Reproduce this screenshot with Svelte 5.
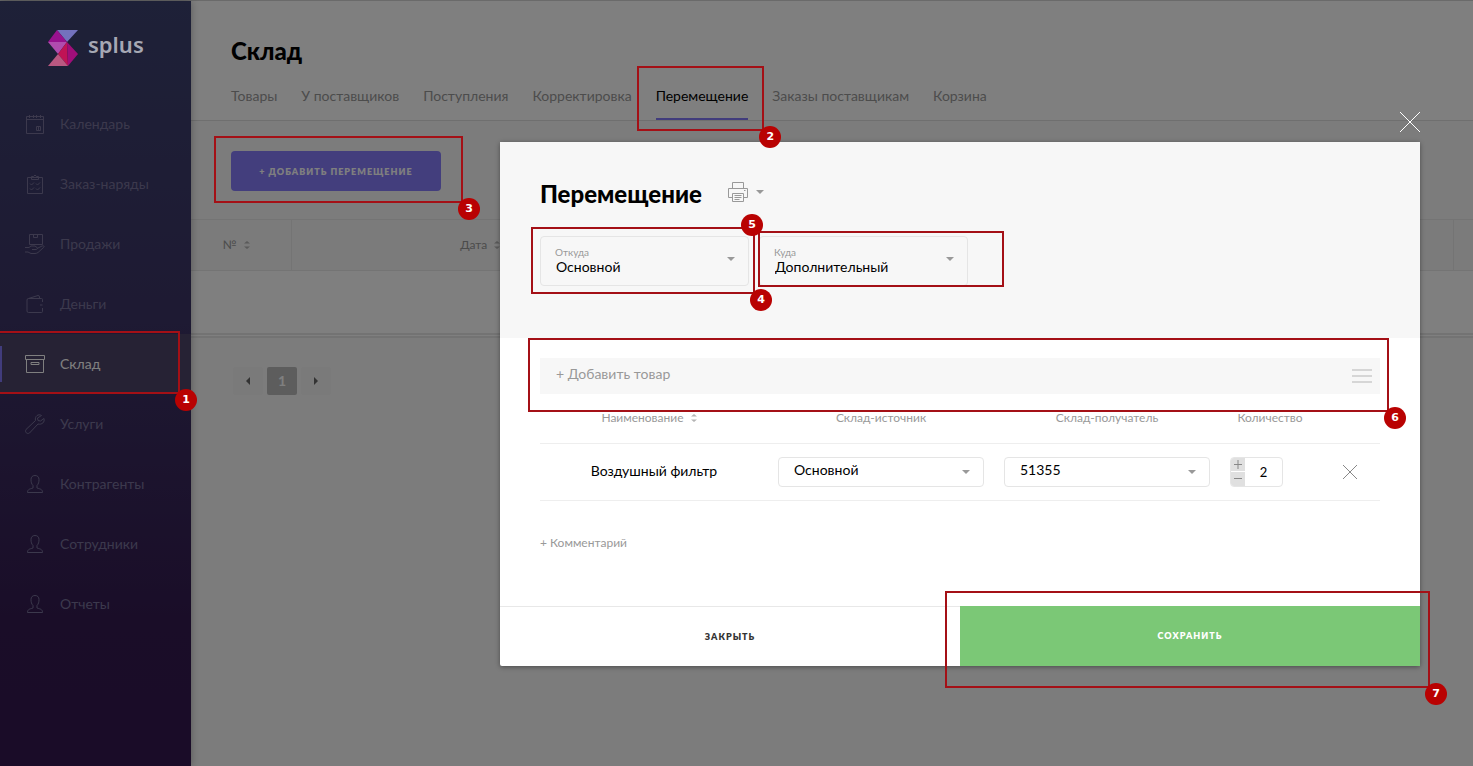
<script>
  const menu = [
    { icon: "calendar", label: "Календарь" },
    { icon: "orders", label: "Заказ-наряды" },
    { icon: "sales", label: "Продажи" },
    { icon: "wallet", label: "Деньги" },
    { icon: "box", label: "Склад", active: true },
    { icon: "wrench", label: "Услуги" },
    { icon: "person", label: "Контрагенты" },
    { icon: "person", label: "Сотрудники" },
    { icon: "person", label: "Отчеты" },
  ];

  const tabs = [
    "Товары",
    "У поставщиков",
    "Поступления",
    "Корректировка",
    "Перемещение",
    "Заказы поставщикам",
    "Корзина",
  ];
  const activeTab = "Перемещение";

  let from = $state("Основной");
  let to = $state("Дополнительный");
  let source = $state("Основной");
  let target = $state("51355");
  let quantity = $state(2);
  let search = $state("");
</script>

{#snippet caret()}
  <svg class="caret" width="8" height="4" viewBox="0 0 8 4" aria-hidden="true">
    <path d="M0 0h8L4 4z" fill="currentColor" />
  </svg>
{/snippet}

{#snippet sort()}
  <svg class="sort" width="6" height="8" viewBox="0 0 6 8" aria-hidden="true">
    <path d="M0 2.500L3 0l3 2.500zM0 5.500h6L3 8z" fill="currentColor" />
  </svg>
{/snippet}

{#snippet mark(number)}
  <span class="mark mark-{number}"><b>{number}</b></span>
{/snippet}

{#snippet menuIcon(name)}
  <svg class="menu-icon" width="20" height="20" viewBox="0 0 20 20" aria-hidden="true">
    {#if name === "calendar"}
      <path d="M1.500 2.500h17v17h-17zM1.500 5.500h17M4.500 1v3M8.500 1v3M11.500 1v3M15.500 1v3M11.500 12.500h4v4h-4zM13.500 12.500v4" />
    {:else if name === "orders"}
      <path d="M2.500 3.500h15v16h-15zM6.500 5.500v-3h2l1.500-1.500 1.500 1.500h2v3zM5 9.500l1.500 1.500 2.500-2.500M11 9.500l1.500 1.500 2.500-2.500M5 14.500l1.500 1.500 2.500-2.500M11 14.500l1.500 1.500 2.500-2.500" />
    {:else if name === "sales"}
      <path d="M4.500.500h13v10h-13zM8.500.500v3h4v-3M0 13.500h4l2-1.500h4l2 1.500c1 1 0 2-1 2H7M12 14.500l5-2.500c2-.500 3 .500 1.500 1.500L13 18.500c-1 .700-2 1-3 1H6l-3-1.500H0" />
    {:else if name === "wallet"}
      <path d="M17.500 14v3.500q0 1-1 1H3.500q-1.500 0-1.500-1.500V6q0-1.500 1.500-1.500h13q1 0 1 1V8M3.500 4.500L13 1.500q1.500 0 1.500 1.500v1.500M15 11h2.500" />
    {:else if name === "box"}
      <path d="M.500 1.500h19v4H.500zM1.500 5.500h17v13h-17zM6 8.500h8v2H6z" />
    {:else if name === "wrench"}
      <path d="M16.500 1.500c-3-2-7 .500-6 5L1 15.500c-1.500 2.500 1 5 3.500 3.500L13 10c4 1 7-2 6-5.500L15.500 7l-2.500-.500-.500-2.500z" />
    {:else}
      <path d="M10 1.500c-2.500 0-4 1.500-4 4 0 2.500.500 4.500 2 6v2.500c-2 1-5.500.500-5.500 4.500h15c0-4-3.500-3.500-5.500-4.500v-2.500c1.500-1.500 2-3.500 2-6 0-2.500-1.500-4-4-4z" />
    {/if}
  </svg>
{/snippet}

<div class="page">
  <aside>
    <a class="logo" href="#home">
      <svg width="30" height="37" viewBox="0 0 30 37" aria-hidden="true">
        <path d="M9 0h21L19 12z" fill="#7372bd" />
        <path d="M9 0L0 12h19z" fill="#98128e" />
        <path d="M0 12h19L10 24z" fill="#b04cae" />
        <path d="M19 12L10 24l10 12z" fill="#c01355" />
        <path d="M19 12l11 12-10 12z" fill="#a00e79" />
        <path d="M10 24L0 36h20z" fill="#b95881" />
      </svg>
      <span>splus</span>
    </a>
    <nav>
      {#each menu as item}
        <a class="menu-item" class:active={item.active} href="#menu">
          {@render menuIcon(item.icon)}
          <span>{item.label}</span>
          {#if item.active}
            {@render mark(1)}
          {/if}
        </a>
      {/each}
    </nav>
  </aside>

  <main>
    <header>
      <h1>Склад</h1>
      <nav class="tabs">
        {#each tabs as tab}
          <a href="#tab" class:active={tab === activeTab}>
            {tab}
            {#if tab === activeTab}
              {@render mark(2)}
            {/if}
          </a>
        {/each}
      </nav>
    </header>

    <div class="toolbar">
      <div class="anchor">
        <button class="add">+ Добавить перемещение</button>
        {@render mark(3)}
      </div>
    </div>

    <table class="list">
      <thead>
        <tr>
          <th class="number">№ {@render sort()}</th>
          <th class="date">Дата {@render sort()}</th>
          <th></th>
          <th class="last"></th>
        </tr>
      </thead>
      <tbody>
        <tr><td colspan="4"></td></tr>
      </tbody>
    </table>

    <div class="pagination">
      <button aria-label="Назад">
        <svg width="4" height="8" viewBox="0 0 4 8"><path d="M4 0v8L0 4z" /></svg>
      </button>
      <button class="current">1</button>
      <button aria-label="Вперед">
        <svg width="4" height="8" viewBox="0 0 4 8"><path d="M0 0v8l4-4z" /></svg>
      </button>
    </div>
  </main>
</div>

<div class="overlay">
  <div class="modal" role="dialog" aria-labelledby="modal-title">
    <button class="close" aria-label="Закрыть окно">
      <svg width="20" height="20" viewBox="0 0 20 20"><path d="M0 0l20 20M20 0L0 20" /></svg>
    </button>

    <div class="modal-head">
      <div class="title-row">
        <h2 id="modal-title">Перемещение</h2>
        <button class="print" aria-label="Печать">
          <svg width="20" height="20" viewBox="0 0 20 20">
            <path d="M4.500 6V.500h11V6M4.500 15.500h-4v-9h19v9h-4M4.500 11.500h11v8h-11zM6.500 13.500h7M6.500 15.500h7M6.500 17.500h5M16 8.500h1.500" />
          </svg>
          {@render caret()}
        </button>
      </div>

      <div class="stores">
        <div class="store">
          <label for="from">Откуда</label>
          <select id="from" bind:value={from}>
            <option>Основной</option>
            <option>Дополнительный</option>
          </select>
          {@render caret()}
          {@render mark(4)}
        </div>
        <div class="store">
          <label for="to">Куда</label>
          <select id="to" bind:value={to}>
            <option>Основной</option>
            <option>Дополнительный</option>
          </select>
          {@render caret()}
          {@render mark(5)}
        </div>
      </div>
    </div>

    <div class="modal-body">
      <div class="search">
        <input type="text" placeholder="+ Добавить товар" aria-label="Добавить товар" bind:value={search} />
        <button aria-label="Каталог">
          <svg width="20" height="14" viewBox="0 0 20 14"><path d="M0 1h20M0 7h20M0 13h20" /></svg>
        </button>
        {@render mark(6)}
      </div>

      <table class="goods">
        <thead>
          <tr>
            <th class="name">Наименование {@render sort()}</th>
            <th class="place">Склад-источник</th>
            <th class="place">Склад-получатель</th>
            <th class="count">Количество</th>
            <th class="remove"></th>
          </tr>
        </thead>
        <tbody>
          <tr>
            <td class="product">Воздушный фильтр</td>
            <td>
              <div class="select">
                <select aria-label="Склад-источник" bind:value={source}>
                  <option>Основной</option>
                  <option>51355</option>
                </select>
                {@render caret()}
              </div>
            </td>
            <td>
              <div class="select">
                <select aria-label="Склад-получатель" bind:value={target}>
                  <option>Основной</option>
                  <option>51355</option>
                </select>
                {@render caret()}
              </div>
            </td>
            <td>
              <div class="quantity">
                <div class="steps">
                  <button aria-label="Больше" onclick={() => (quantity += 1)}>
                    <svg width="8" height="9" viewBox="0 0 8 9"><path d="M0 4.500h8M4 0v9" /></svg>
                  </button>
                  <button aria-label="Меньше" onclick={() => (quantity -= 1)}>
                    <svg width="8" height="9" viewBox="0 0 8 9"><path d="M0 4.500h8" /></svg>
                  </button>
                </div>
                <input type="text" aria-label="Количество" bind:value={quantity} />
              </div>
            </td>
            <td>
              <button class="delete" aria-label="Удалить">
                <svg width="14" height="14" viewBox="0 0 14 14"><path d="M0 0l14 14M14 0L0 14" /></svg>
              </button>
            </td>
          </tr>
        </tbody>
      </table>

      <button class="comment">+ Комментарий</button>
    </div>

    <div class="modal-foot">
      <button class="cancel">Закрыть</button>
      <div class="anchor">
        <button class="save">Сохранить</button>
        {@render mark(7)}
      </div>
    </div>
  </div>
</div>

<style>
  :global(body) {
    font-family: Lato, "Open Sans", sans-serif;
    font-size: 14px;
    color: #000;
  }

  * {
    box-sizing: border-box;
  }

  a {
    color: inherit;
    text-decoration: none;
  }

  button,
  input,
  select {
    font: inherit;
    color: inherit;
    margin: 0;
    padding: 0;
    border: 0;
    background: none;
    border-radius: 0;
  }

  button {
    cursor: pointer;
  }

  svg {
    display: block;
    flex: none;
  }

  table {
    width: 100%;
    table-layout: fixed;
    border-collapse: collapse;
  }

  th {
    font-size: 12px;
    font-weight: 400;
    color: #999;
  }

  .page {
    display: flex;
    min-height: 100vh;
    border-top: 1px solid #d4d4d4;
  }

  aside {
    position: relative;
    flex: none;
    width: 191px;
    background: linear-gradient(#3c4270, #3c3466 42%, #341a50 82%, #341850);
    box-shadow: 0 0 8px rgba(0, 0, 0, 0.3);
  }

  /* the logo stays lit while a dialog is open */
  .logo {
    position: relative;
    z-index: 11;
    display: flex;
    gap: 10px;
    height: 93px;
    padding: 29px 0 0 48px;
    font: 600 22px/28px "Noto Sans", sans-serif;
    color: #a6a8b4;
  }

  .menu-item {
    position: relative;
    display: flex;
    align-items: center;
    gap: 15px;
    height: 60px;
    padding-left: 25px;
    color: #78739a;
  }

  .menu-item > span:not(.mark) {
    padding-bottom: 2px;
  }

  .menu-item.active {
    background: #4c4468;
    color: #fff;
  }

  .menu-item.active::before {
    content: "";
    position: absolute;
    left: 0;
    width: 2px;
    height: 36px;
    background: #8278f8;
  }

  .menu-icon {
    fill: none;
    stroke: currentColor;
  }

  main {
    flex: 1;
    min-width: 0;
    background: #f9f9f9;
  }

  header {
    padding: 34px 40px 0;
    background: #fff;
    border-bottom: 1px solid #dedede;
  }

  h1,
  h2 {
    margin: 0;
    font-size: 24px;
    line-height: 32px;
    font-weight: 900;
  }

  .tabs {
    display: flex;
    gap: 24px;
    margin-top: 5px;
    color: #999;
    white-space: nowrap;
  }

  .tabs a {
    position: relative;
    height: 48px;
    line-height: 48px;
  }

  .tabs .active {
    color: #000;
    box-shadow: inset 0 -2px #8278f8;
  }

  .toolbar {
    display: flex;
    padding: 30px 40px 28px;
  }

  .anchor {
    position: relative;
  }

  .add {
    width: 210px;
    height: 40px;
    border-radius: 4px;
    background: #867cfb;
    color: #fff;
  }

  .add,
  .cancel,
  .save {
    font-size: 9px;
    font-weight: 800;
    letter-spacing: 1px;
    text-transform: uppercase;
  }

  .list {
    border-bottom: 5px double #e6e6e6;
  }

  .list th {
    height: 51px;
    padding-bottom: 3px;
    background: #f6f6f6;
    border: solid #e9e9e9;
    border-width: 1px 0;
  }

  .list .number {
    width: 100px;
    padding-right: 10px;
    border-right-width: 1px;
  }

  .list .date {
    width: 378px;
  }

  .list .last {
    width: 20px;
    border-left-width: 1px;
  }

  .list td {
    height: 65px;
    background: #fff;
  }

  .sort {
    display: inline-block;
    margin-left: 4px;
    color: #b4b4b4;
  }

  .pagination {
    display: flex;
    gap: 4px;
    padding: 29px 42px;
  }

  .pagination button {
    display: grid;
    place-items: center;
    width: 30px;
    height: 28px;
    border-radius: 2px;
    background: #f5f5f5;
    color: #fff;
  }

  .pagination svg {
    fill: #666;
  }

  .pagination .current {
    padding-bottom: 2px;
    background: #bbb;
    font-weight: 700;
  }

  .overlay {
    position: absolute;
    inset: 0;
    z-index: 10;
    display: flex;
    justify-content: flex-end;
    align-items: flex-start;
    padding: 142px 53px 0;
    background: rgba(0, 0, 0, 0.5);
  }

  .modal {
    position: relative;
    width: 920px;
    background: #fff;
    border-radius: 2px;
    box-shadow: 0 1px 5px rgba(0, 0, 0, 0.4);
  }

  .close {
    position: absolute;
    right: 0;
    top: -30px;
  }

  .close svg,
  .delete svg,
  .steps svg {
    fill: none;
    stroke: currentColor;
  }

  .close svg {
    color: #fff;
  }

  .modal-head {
    height: 196px;
    padding: 36px 40px;
    background: #f7f7f7;
  }

  .title-row,
  .print,
  .stores {
    display: flex;
    align-items: center;
  }

  .title-row {
    gap: 26px;
  }

  .print {
    gap: 8px;
    padding-bottom: 4px;
    color: #999;
  }

  .print svg:first-child {
    fill: none;
    stroke: currentColor;
  }

  .stores {
    gap: 10px;
    margin-top: 26px;
  }

  .store,
  .select {
    position: relative;
    border: 1px solid #e5e5e5;
    border-radius: 4px;
  }

  .store {
    width: 209px;
    height: 50px;
  }

  .store label {
    position: absolute;
    left: 14px;
    top: 8px;
    font-size: 10px;
    line-height: 14px;
    color: #999;
  }

  select {
    display: block;
    width: 100%;
    height: 100%;
    padding: 0 15px 4px;
    appearance: none;
    outline: none;
  }

  .store select {
    padding-top: 14px;
  }

  .store .caret,
  .select .caret {
    position: absolute;
    right: 13px;
    top: 50%;
    margin-top: -2px;
    color: #999;
    pointer-events: none;
  }

  .store .caret {
    margin-top: -4px;
  }

  .modal-body {
    padding: 20px 40px 54px;
  }

  .search {
    position: relative;
    display: flex;
    align-items: center;
    height: 36px;
    padding: 0 8px 0 16px;
    background: #f7f7f7;
  }

  .search input {
    flex: 1;
    height: 36px;
    padding-bottom: 5px;
    outline: none;
  }

  .search input::placeholder {
    color: #999;
    opacity: 1;
  }

  .search button svg {
    stroke: #d6d6d6;
    stroke-width: 2;
  }

  .goods th {
    height: 49px;
    padding: 0 0 1px;
    border-bottom: 1px solid #eee;
  }

  .goods .name {
    padding-right: 10px;
  }

  .goods td {
    height: 57px;
    padding: 0 10px;
    text-align: center;
    border-bottom: 1px solid #eee;
  }

  .goods .product {
    padding-bottom: 2px;
  }

  .goods .place {
    width: 226px;
  }

  .goods .count {
    width: 100px;
  }

  .goods .remove {
    width: 60px;
  }

  .select {
    height: 30px;
  }

  .quantity {
    display: flex;
    width: 53px;
    height: 30px;
    border: 1px solid #e5e5e5;
    border-radius: 4px;
    overflow: hidden;
  }

  .quantity input {
    width: 37px;
    font-size: 13px;
    text-align: center;
    outline: none;
  }

  .steps {
    display: grid;
    gap: 1px;
    width: 14px;
  }

  .steps button {
    display: grid;
    place-items: center;
    background: #e0e0e0;
    color: #888;
  }

  .delete {
    display: block;
    margin: 0 auto;
    color: #888;
  }

  .comment {
    display: block;
    margin-top: 33px;
    font-size: 12px;
    line-height: 18px;
    color: #999;
  }

  .modal-foot {
    display: grid;
    grid-template-columns: 1fr 1fr;
    height: 60px;
  }

  .cancel {
    border-top: 1px solid #e8e8e8;
    color: #333;
  }

  .save {
    width: 100%;
    height: 100%;
    background: #7bc876;
    color: #fff;
  }

  /* numbered frames of the guide */
  .mark {
    position: absolute;
    z-index: 20;
    border: 2px solid #a41016;
    pointer-events: none;
  }

  .mark b {
    position: absolute;
    right: -19px;
    bottom: -19px;
    width: 22px;
    height: 22px;
    border-radius: 50%;
    background: #b90202;
    color: #fff;
    font: 700 11px/22px "DejaVu Sans", sans-serif;
    text-align: center;
  }

  .mark-1 {
    inset: -3px 11px 0 -2px;
  }

  .mark-2 {
    inset: -6px -16px -11px -19px;
  }

  .mark-3 {
    inset: -15px -22px -12px -17px;
  }

  .mark-4 {
    inset: -10px -7px -9px -10px;
  }

  .mark-5 {
    inset: -6px -37px -2px -2px;
  }

  .mark-5 b {
    inset: -19px auto auto -19px;
  }

  .mark-6 {
    inset: -20px -9px -18px -12px;
  }

  .mark-7 {
    inset: -15px -10px -22px -15px;
  }
</style>
